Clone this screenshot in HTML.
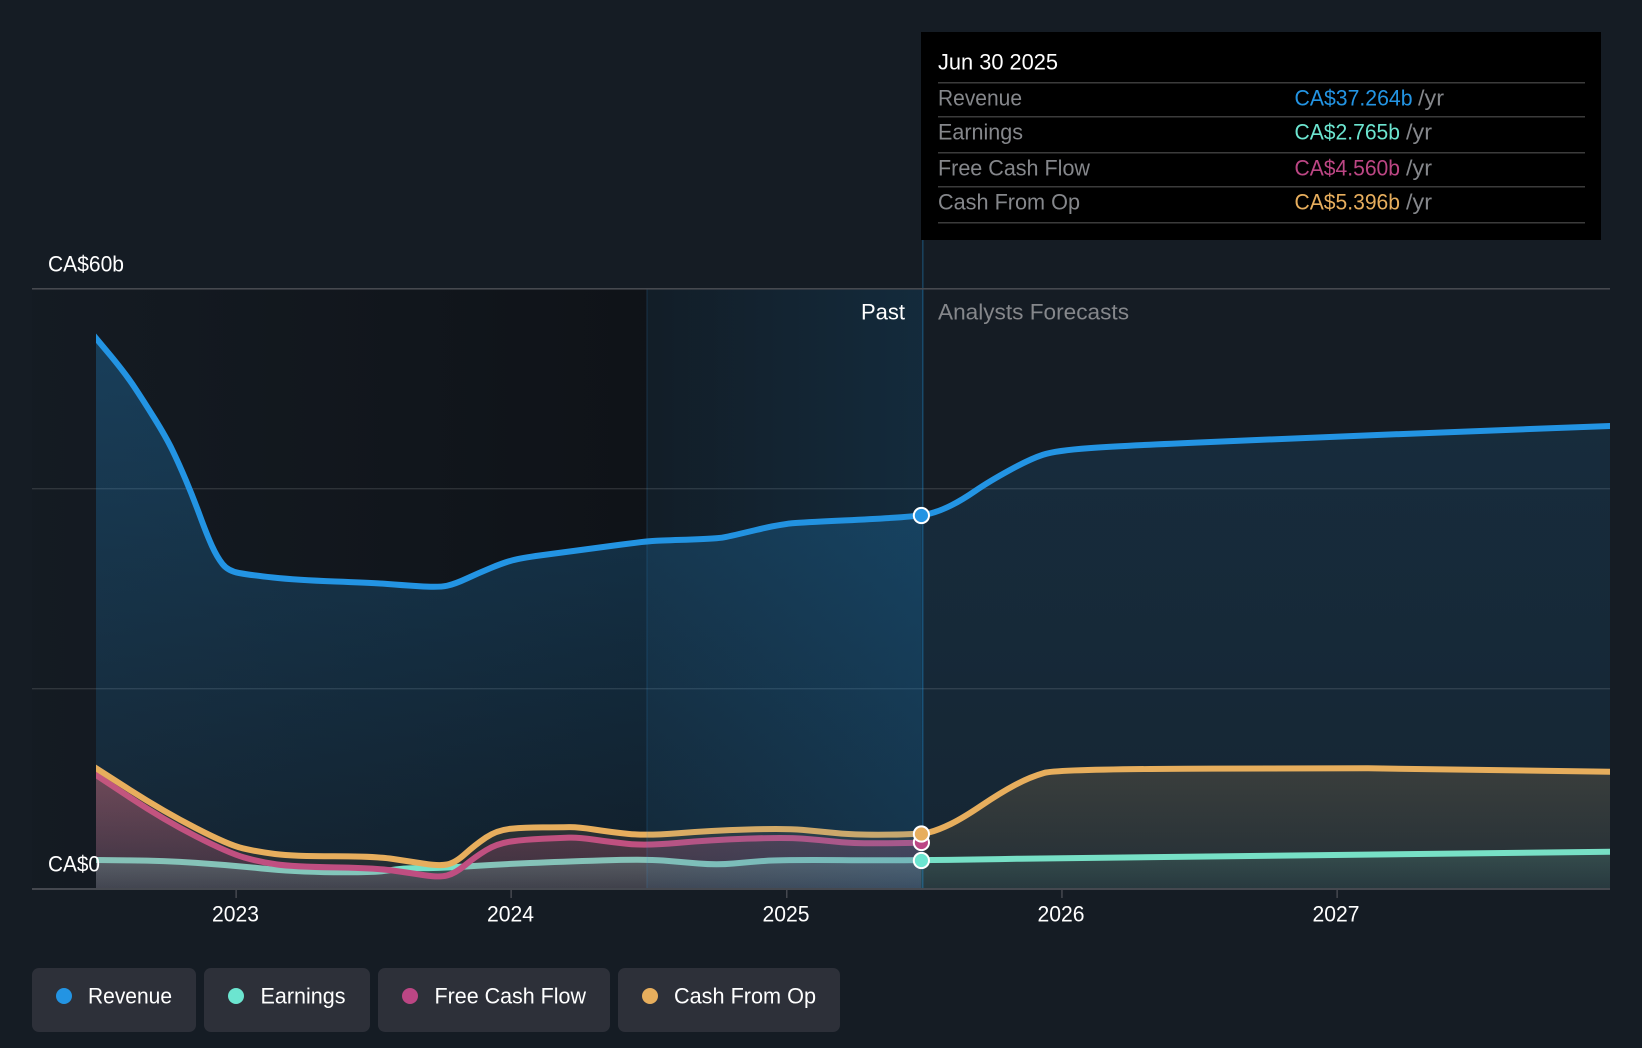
<!DOCTYPE html>
<html lang="en"><head><meta charset="utf-8"><title>Revenue and Earnings Chart</title>
<style>
html,body{margin:0;padding:0;background:#151c24;width:1642px;height:1048px;overflow:hidden}
svg{display:block;position:absolute;left:0;top:0}
text{font-family:"Liberation Sans",Arial,sans-serif;font-size:22px;fill:#fff}
.g{fill:#85878b}
</style></head><body>
<svg width="1642" height="1048" viewBox="0 0 1642 1048" xmlns="http://www.w3.org/2000/svg">
<defs>
<clipPath id="c"><rect x="96" y="280" width="1514" height="609"/></clipPath>
<clipPath id="cp"><rect x="96" y="280" width="825.4" height="609"/></clipPath>
<clipPath id="cf"><rect x="921.4" y="280" width="688.6" height="609"/></clipPath>
<linearGradient id="dark" gradientUnits="userSpaceOnUse" x1="32" x2="646" y1="0" y2="0"><stop offset="0" stop-color="#0a0b0e" stop-opacity=".06"/><stop offset="1" stop-color="#0a0b0e" stop-opacity=".55"/></linearGradient>
<linearGradient id="blue" gradientUnits="userSpaceOnUse" x1="647" x2="923" y1="0" y2="0"><stop offset="0" stop-color="#1a84c8" stop-opacity=".05"/><stop offset="1" stop-color="#1a84c8" stop-opacity=".17"/></linearGradient>
<linearGradient id="frp" gradientUnits="userSpaceOnUse" x1="0" x2="0" y1="330" y2="889"><stop offset="0" stop-color="#2394df" stop-opacity=".3"/><stop offset="1" stop-color="#2394df" stop-opacity=".09"/></linearGradient>
<linearGradient id="frf" gradientUnits="userSpaceOnUse" x1="0" x2="0" y1="430" y2="889"><stop offset="0" stop-color="#2394df" stop-opacity=".13"/><stop offset="1" stop-color="#2394df" stop-opacity=".08"/></linearGradient>
<linearGradient id="fep" gradientUnits="userSpaceOnUse" x1="0" x2="0" y1="851" y2="889"><stop offset="0" stop-color="#6ce5d0" stop-opacity=".32"/><stop offset="1" stop-color="#6ce5d0" stop-opacity=".12"/></linearGradient>
<linearGradient id="fef" gradientUnits="userSpaceOnUse" x1="0" x2="0" y1="851" y2="889"><stop offset="0" stop-color="#6ce5d0" stop-opacity=".15"/><stop offset="1" stop-color="#6ce5d0" stop-opacity=".06"/></linearGradient>
<linearGradient id="ff" gradientUnits="userSpaceOnUse" x1="0" x2="0" y1="768" y2="889"><stop offset="0" stop-color="#bc4684" stop-opacity=".4"/><stop offset="1" stop-color="#bc4684" stop-opacity=".15"/></linearGradient>
<linearGradient id="fc" gradientUnits="userSpaceOnUse" x1="0" x2="0" y1="768" y2="889"><stop offset="0" stop-color="#e7ae5d" stop-opacity=".17"/><stop offset="1" stop-color="#e7ae5d" stop-opacity=".06"/></linearGradient>
</defs>

<rect x="32" y="289" width="614" height="600" fill="url(#dark)"/>
<rect x="647" y="289" width="276" height="600" fill="#0a0b0e" fill-opacity=".25"/>

<rect x="32" y="488" width="1578" height="1.4" fill="#fff" fill-opacity=".12"/>
<rect x="32" y="688" width="1578" height="1.4" fill="#fff" fill-opacity=".12"/>

<g clip-path="url(#cp)"><path fill="url(#frp)" d="M90 331L110.5 355.5Q125 373 134 386.5Q143 400 154.5 418.5Q166 437 172.3 450Q178.6 463 185.8 480Q193 497 200 516Q207 535 212 546Q217 557 222.5 564Q228 571 239 573Q250 575 273 577.5Q296 580 335.5 581.5Q375 583 387.5 584Q400 585 419.5 586.25Q439 587.5 447 585.75Q455 584 466.8 578.5Q478.6 573 491.1 567.85Q503.6 562.7 512.3 560.35Q521 558 540.5 555.35Q560 552.7 578 550.35Q596 548 621 544.65Q646 541.3 656.5 540.8Q667 540.3 692 539.5Q717 538.7 724 537.35Q731 536 756 530Q781 524 795.5 523Q810 522 845.5 520.35Q881 518.7 901.2 517.2Q921.4 515.7 930.7 513.35L930.7 889L90 889Z"/></g>
<g clip-path="url(#cf)"><path fill="url(#frf)" d="M901.2 517.2Q921.4 515.7 930.7 513.35Q940 511 951 505.5Q962 500 975.3 490.85Q988.6 481.7 1009.3 470.35Q1030 459 1043 454.75Q1056 450.5 1089.5 448.1Q1123 445.7 1204.8 442.2Q1286.6 438.7 1368.3 435.35Q1450 432 1530 429L1616 425.8L1616 889L901.2 889Z"/></g>
<g clip-path="url(#c)">
<path fill="none" stroke="#2394e3" stroke-width="6" d="M90 331L110.5 355.5Q125 373 134 386.5Q143 400 154.5 418.5Q166 437 172.3 450Q178.6 463 185.8 480Q193 497 200 516Q207 535 212 546Q217 557 222.5 564Q228 571 239 573Q250 575 273 577.5Q296 580 335.5 581.5Q375 583 387.5 584Q400 585 419.5 586.25Q439 587.5 447 585.75Q455 584 466.8 578.5Q478.6 573 491.1 567.85Q503.6 562.7 512.3 560.35Q521 558 540.5 555.35Q560 552.7 578 550.35Q596 548 621 544.65Q646 541.3 656.5 540.8Q667 540.3 692 539.5Q717 538.7 724 537.35Q731 536 756 530Q781 524 795.5 523Q810 522 845.5 520.35Q881 518.7 901.2 517.2Q921.4 515.7 930.7 513.35Q940 511 951 505.5Q962 500 975.3 490.85Q988.6 481.7 1009.3 470.35Q1030 459 1043 454.75Q1056 450.5 1089.5 448.1Q1123 445.7 1204.8 442.2Q1286.6 438.7 1368.3 435.35Q1450 432 1530 429L1616 425.8"/>
</g>

<g clip-path="url(#cp)"><path fill="url(#fep)" d="M90 860L130 860.35Q164 860.7 196.3 862.85Q228.6 865 260.8 868.35Q293 871.7 334 872.2Q375 872.7 389.3 870.35Q403.6 868 421.3 868.15Q439 868.3 469.5 866.3Q500 864.3 530 863Q560 861.7 603 860.35Q646 859 663 860.5Q680 862 698.5 863.5Q717 865 733.5 863.5Q750 862 765.5 860.85Q781 859.7 851 860.2Q921 860.7 1020.5 858.7L1020.5 889L90 889Z"/></g>
<g clip-path="url(#cf)"><path fill="url(#fef)" d="M851 860.2Q921 860.7 1020.5 858.7L1616 851.7L1616 889L851 889Z"/></g>
<g clip-path="url(#c)">
<path fill="none" stroke="#6ce5d0" stroke-width="6" d="M90 860L130 860.35Q164 860.7 196.3 862.85Q228.6 865 260.8 868.35Q293 871.7 334 872.2Q375 872.7 389.3 870.35Q403.6 868 421.3 868.15Q439 868.3 469.5 866.3Q500 864.3 530 863Q560 861.7 603 860.35Q646 859 663 860.5Q680 862 698.5 863.5Q717 865 733.5 863.5Q750 862 765.5 860.85Q781 859.7 851 860.2Q921 860.7 1020.5 858.7L1616 851.7"/>

<path fill="url(#ff)" d="M90 771L130 797.5Q164 820 196.3 836.5Q228.6 853 244.3 857.5Q260 862 276.5 864.35Q293 866.7 334 867.35Q375 868 392.5 870.5Q410 873 424.5 875.25Q439 877.5 447 875.5Q455 873.5 465 865.25Q475 857 486 850.25Q497 843.5 511 841.5Q525 839.5 542.5 838.75Q560 838 569 837.65Q578 837.3 594 839.65Q610 842 628 843.85Q646 845.7 678 842.85Q710 840 747.5 838.65Q785 837.3 802.5 838.65Q820 840 838 841.85Q856 843.7 888.5 843.2L921 842.7L921 889L90 889Z"/>
<path fill="none" stroke="#bc4684" stroke-width="6" d="M90 771L130 797.5Q164 820 196.3 836.5Q228.6 853 244.3 857.5Q260 862 276.5 864.35Q293 866.7 334 867.35Q375 868 392.5 870.5Q410 873 424.5 875.25Q439 877.5 447 875.5Q455 873.5 465 865.25Q475 857 486 850.25Q497 843.5 511 841.5Q525 839.5 542.5 838.75Q560 838 569 837.65Q578 837.3 594 839.65Q610 842 628 843.85Q646 845.7 678 842.85Q710 840 747.5 838.65Q785 837.3 802.5 838.65Q820 840 838 841.85Q856 843.7 888.5 843.2L921 842.7"/>

<path fill="url(#fc)" d="M90 764.4L130 790Q164 811.7 196.3 828.35Q228.6 845 242.8 848.35Q257 851.7 275 854Q293 856.3 334 856.3Q375 856.3 392.5 858.9Q410 861.5 424.5 863.75Q439 866 447 864.5Q455 863 465 854Q475 845 486 837.5Q497 830 511 828.75Q525 827.5 542.5 827.4Q560 827.3 569 827.15Q578 827 594 829.5Q610 832 628 833.85Q646 835.7 678 833.2Q710 830.7 747.5 829.5Q785 828.3 802.5 829.9Q820 831.5 838 833.25Q856 835 888.5 834.65Q921 834.3 929.75 832.15Q938.5 830 950.75 824Q963 818 981.5 805.5Q1000 793 1015 785Q1030 777 1044 773Q1058 769 1213 768.65L1368 768.3L1616 771.8L1616 889L90 889Z"/>
<path fill="none" stroke="#e7ae5d" stroke-width="6" d="M90 764.4L130 790Q164 811.7 196.3 828.35Q228.6 845 242.8 848.35Q257 851.7 275 854Q293 856.3 334 856.3Q375 856.3 392.5 858.9Q410 861.5 424.5 863.75Q439 866 447 864.5Q455 863 465 854Q475 845 486 837.5Q497 830 511 828.75Q525 827.5 542.5 827.4Q560 827.3 569 827.15Q578 827 594 829.5Q610 832 628 833.85Q646 835.7 678 833.2Q710 830.7 747.5 829.5Q785 828.3 802.5 829.9Q820 831.5 838 833.25Q856 835 888.5 834.65Q921 834.3 929.75 832.15Q938.5 830 950.75 824Q963 818 981.5 805.5Q1000 793 1015 785Q1030 777 1044 773Q1058 769 1213 768.65L1368 768.3L1616 771.8"/>
</g>

<rect x="647" y="289" width="276" height="600" fill="url(#blue)"/>
<rect x="646.5" y="289" width="1.5" height="600" fill="#2394df" fill-opacity=".1"/>
<rect x="922" y="240" width="1.6" height="649" fill="#2394df" fill-opacity=".3"/>

<rect x="32" y="288" width="1578" height="1.6" fill="#46494f"/>
<rect x="32" y="888" width="1578" height="2" fill="#45484f"/>
<rect x="235.4" y="890" width="1.5" height="8" fill="#45484f"/>
<rect x="510.4" y="890" width="1.5" height="8" fill="#45484f"/>
<rect x="786" y="890" width="1.5" height="8" fill="#45484f"/>
<rect x="1061.2" y="890" width="1.5" height="8" fill="#45484f"/>
<rect x="1336.4" y="890" width="1.5" height="8" fill="#45484f"/>

<circle cx="921.4" cy="515.5" r="7.6" fill="#2394e3" stroke="#fff" stroke-width="2"/>
<circle cx="921.4" cy="842.5" r="7.6" fill="#bc4684" stroke="#fff" stroke-width="2"/>
<circle cx="921.4" cy="834" r="7.6" fill="#e7ae5d" stroke="#fff" stroke-width="2"/>
<circle cx="921.4" cy="860.5" r="7.6" fill="#6ce5d0" stroke="#fff" stroke-width="2"/>

<rect x="921" y="32" width="680" height="208" fill="#000"/>
<rect x="938" y="82" width="647" height="1.5" fill="#3b3b3b"/>
<rect x="938" y="116" width="647" height="1.5" fill="#3b3b3b"/>
<rect x="938" y="152" width="647" height="1.5" fill="#3b3b3b"/>
<rect x="938" y="186" width="647" height="1.5" fill="#3b3b3b"/>
<rect x="938" y="222" width="647" height="1.5" fill="#3b3b3b"/>

<rect x="32" y="968" width="164" height="64" rx="7" fill="#2d3039"/>
<rect x="204" y="968" width="166" height="64" rx="7" fill="#2d3039"/>
<rect x="378" y="968" width="232" height="64" rx="7" fill="#2d3039"/>
<rect x="618" y="968" width="222" height="64" rx="7" fill="#2d3039"/>
<circle cx="64" cy="996" r="8" fill="#2394e3"/>
<circle cx="236" cy="996" r="8" fill="#6ce5d0"/>
<circle cx="410" cy="996" r="8" fill="#bc4684"/>
<circle cx="650" cy="996" r="8" fill="#e7ae5d"/>

<g transform="translate(0,-.5)">
<text x="48" y="272" textLength="76" lengthAdjust="spacingAndGlyphs">CA$60b</text>
<text x="48" y="872" textLength="52" lengthAdjust="spacingAndGlyphs">CA$0</text>
<text x="861" y="320" textLength="44" lengthAdjust="spacingAndGlyphs">Past</text>
<text class="g" x="938" y="320" textLength="191" lengthAdjust="spacingAndGlyphs">Analysts Forecasts</text>
<text x="212" y="922" textLength="47" lengthAdjust="spacingAndGlyphs">2023</text>
<text x="487" y="922" textLength="47" lengthAdjust="spacingAndGlyphs">2024</text>
<text x="762.5" y="922" textLength="47" lengthAdjust="spacingAndGlyphs">2025</text>
<text x="1037.5" y="922" textLength="47" lengthAdjust="spacingAndGlyphs">2026</text>
<text x="1312.5" y="922" textLength="47" lengthAdjust="spacingAndGlyphs">2027</text>
<text x="938" y="70" textLength="120" lengthAdjust="spacingAndGlyphs">Jun 30 2025</text>
<text class="g" x="938" y="106" textLength="84" lengthAdjust="spacingAndGlyphs">Revenue</text>
<text class="g" x="938" y="140" textLength="85" lengthAdjust="spacingAndGlyphs">Earnings</text>
<text class="g" x="938" y="176" textLength="152" lengthAdjust="spacingAndGlyphs">Free Cash Flow</text>
<text class="g" x="938" y="210" textLength="142" lengthAdjust="spacingAndGlyphs">Cash From Op</text>
<text x="1294.5" y="106" textLength="118" lengthAdjust="spacingAndGlyphs" style="fill:#2394e3">CA$37.264b</text>
<text class="g" x="1418" y="106" textLength="26" lengthAdjust="spacingAndGlyphs">/yr</text>
<text x="1294.5" y="140" textLength="105.5" lengthAdjust="spacingAndGlyphs" style="fill:#6ce5d0">CA$2.765b</text>
<text class="g" x="1406" y="140" textLength="26" lengthAdjust="spacingAndGlyphs">/yr</text>
<text x="1294.5" y="176" textLength="105.5" lengthAdjust="spacingAndGlyphs" style="fill:#bc4684">CA$4.560b</text>
<text class="g" x="1406" y="176" textLength="26" lengthAdjust="spacingAndGlyphs">/yr</text>
<text x="1294.5" y="210" textLength="105.5" lengthAdjust="spacingAndGlyphs" style="fill:#e7ae5d">CA$5.396b</text>
<text class="g" x="1406" y="210" textLength="26" lengthAdjust="spacingAndGlyphs">/yr</text>
<text x="88" y="1004" textLength="84" lengthAdjust="spacingAndGlyphs">Revenue</text>
<text x="260.5" y="1004" textLength="85" lengthAdjust="spacingAndGlyphs">Earnings</text>
<text x="434.5" y="1004" textLength="151.5" lengthAdjust="spacingAndGlyphs">Free Cash Flow</text>
<text x="674" y="1004" textLength="142" lengthAdjust="spacingAndGlyphs">Cash From Op</text>
</g>
</svg>
</body></html>
